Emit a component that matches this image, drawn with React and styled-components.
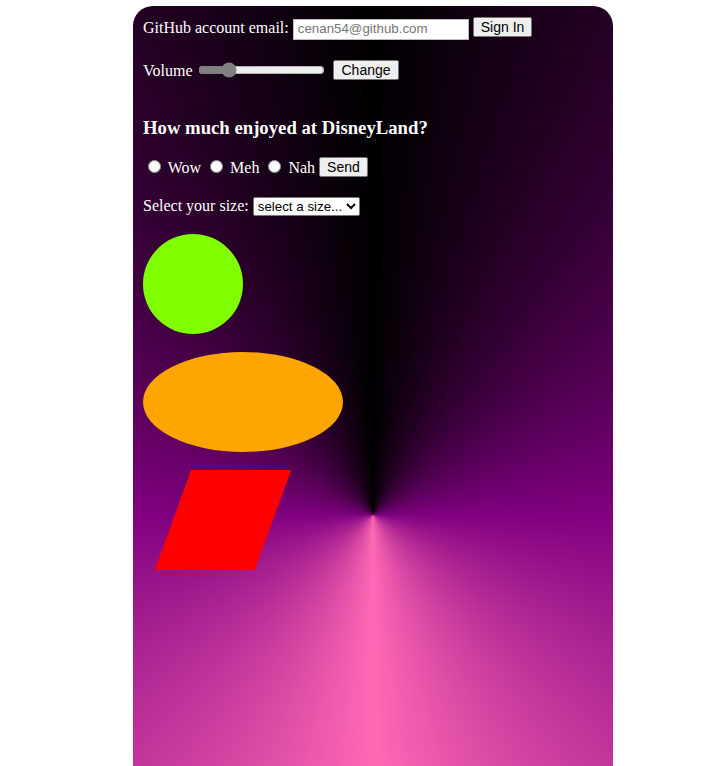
import React from 'react';
import styled, { createGlobalStyle } from 'styled-components';

const GlobalStyle = createGlobalStyle`
    html, body {
        margin: 0;
        padding: 0;
        background: #fff;
    }
    body {
        font-family: "Liberation Serif", "Times New Roman", serif;
        font-size: 16px;
    }
`

const Card = styled.div`
    box-sizing: border-box;
    width: 480px;
    height: 1018px;
    margin: 6px 0 0 133px;
    padding: 10px;
    border-radius: 20px 20px 0 0;
    color: #fff;
    background: conic-gradient(black, purple, hotpink, purple, black);
`

const Row = styled.form`
    margin: ${props => props.gap || 0} 0 0 0;
`

const Heading = styled.h3`
    margin: 37px 0 18px;
    font-size: 18.72px;
    font-weight: bold;
`

const TextInput = styled.input`
    box-sizing: border-box;
    width: 176px;
    height: 21px;
    font-family: "Liberation Sans", Arial, sans-serif;
    font-size: 13.33px;
    padding: 0 4px 1px;
    border: 1px solid #bbb;
    background: #fff;
    color: #333;
    &::placeholder {
        color: #757575;
    }
`

const Button = styled.button`
    box-sizing: border-box;
    height: 20px;
    font-family: "Liberation Sans", Arial, sans-serif;
    font-size: 14px;
    padding: 0 7px;
    margin-left: 4px;
    color: #000;
    background: #efefef;
    border: 1px solid #767676;
    border-radius: 2px;
    vertical-align: 1px;
`

const Range = styled.input`
    width: 127px;
    margin: 2px 4px 2px 2px;
    accent-color: grey;
    vertical-align: -2px;
`

const Radio = styled.input`
    margin: 3px 3px 0 5px;
`

const Select = styled.select`
    font-family: "Liberation Sans", Arial, sans-serif;
    font-size: 13.33px;
    color: #000;
    background: #fff;
    border: 1px solid #767676;
    border-radius: 2px;
`

const Shape = styled.div`
    width: ${props => props.w}px;
    height: 100px;
    margin: 18px 0 0 ${props => props.offset || 0}px;
    background: ${props => props.color};
    border-radius: ${props => props.round ? '50%' : '0'};
    transform: ${props => props.skew ? 'skewX(-20deg)' : 'none'};
`

const App = () => {
    return <>
        <GlobalStyle />
        <Card>
            <Row gap="1px" onSubmit={e => e.preventDefault()}>
                GitHub account email: <TextInput type="email" placeholder="cenan54@github.com" />
                <Button type="submit">Sign In</Button>
            </Row>
            <Row gap="20px" onSubmit={e => e.preventDefault()}>
                Volume <Range type="range" min="0" max="100" defaultValue="20" />
                <Button type="submit">Change</Button>
            </Row>
            <Heading>How much enjoyed at DisneyLand?</Heading>
            <Row onSubmit={e => e.preventDefault()}>
                <Radio type="radio" name="fun" id="wow" /> <label htmlFor="wow">Wow</label>{' '}
                <Radio type="radio" name="fun" id="meh" /> <label htmlFor="meh">Meh</label>{' '}
                <Radio type="radio" name="fun" id="nah" /> <label htmlFor="nah">Nah</label>
                <Button type="submit">Send</Button>
            </Row>
            <Row gap="20px">
                Select your size: <Select defaultValue="">
                    <option value="">select a size...</option>
                    <option value="s">Small</option>
                    <option value="m">Medium</option>
                    <option value="l">Large</option>
                </Select>
            </Row>
            <Shape w={100} color="chartreuse" round />
            <Shape w={200} color="orange" round />
            <Shape w={100} color="red" skew offset={30} />
        </Card>
    </>
}

export default App;
